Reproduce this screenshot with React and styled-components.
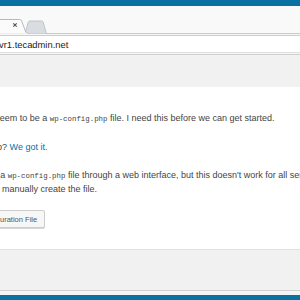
import React from 'react'
import styled, { createGlobalStyle } from 'styled-components'

const GlobalStyle = createGlobalStyle`
  html, body {
    margin: 0;
    padding: 0;
    width: 300px;
    height: 300px;
    overflow: hidden;
    background: #f1f1f1;
  }
  #root {
    height: 300px;
  }
`

const Frame = styled.div`
  display: flex;
  flex-direction: column;
  height: 300px;
  font-family: "Liberation Sans", Arial, sans-serif;
`

const TitleBar = styled.div`
  height: 6px;
  background: #0a72a3;
  flex-shrink: 0;
`

const TabStrip = styled.div`
  height: 27px;
  background: #f9f9f9;
  border-bottom: 1px solid #c9c9c9;
  display: flex;
  align-items: flex-end;
  flex-shrink: 0;
`

const TabRow = styled.svg`
  display: block;
  margin-bottom: -1px;
`

const Toolbar = styled.div`
  background: #f7f7f7;
  padding-top: 1px;
  border-bottom: 1px solid #cfcfcf;
  flex-shrink: 0;
`

const Omnibox = styled.div`
  height: 16px;
  background: #fff;
  border-top: 1px solid #cdcdcd;
  border-bottom: 1px solid #dedede;
  margin-bottom: 1px;
  display: flex;
  align-items: center;
`

const Url = styled.span`
  font-size: 9.4px;
  color: #222;
  margin-left: -1px;
  white-space: nowrap;
`

const Page = styled.div`
  flex: 1;
  display: flex;
  flex-direction: column;
  background: #f1f1f1;
  padding-top: 32px;
`

const Panel = styled.div`
  background: #fff;
  border-bottom: 1px solid #e2e2e2;
  padding-top: 25px;
  box-sizing: border-box;
  height: 163px;
`

const Content = styled.div`
  margin-left: -62px;
  white-space: nowrap;
  font-size: 9px;
  line-height: 13px;
  color: #444;
`

const Para = styled.p`
  margin: 0 0 ${p => p.$gap || 15}px;
`

const Code = styled.code`
  font-family: "Liberation Mono", monospace;
  font-size: 7.4px;
  color: #444;
`

const Link = styled.a`
  color: #0073aa;
  text-decoration: none;
`

const Button = styled.span`
  display: inline-flex;
  align-items: center;
  box-sizing: border-box;
  height: 18px;
  margin-left: 1.5px;
  padding: 0 7px;
  border: 1px solid #cccccc;
  border-radius: 2px;
  background: #f7f7f7;
  box-shadow: 0 1px 0 #d8d8d8;
  font-size: 7.5px;
  color: #555;
`

const Spacer = styled.div`
  flex: 1;
`

const BottomEdge = styled.div`
  height: 4px;
  border-top: 1px solid #d2d2d2;
  background: #f5f5f5;
  flex-shrink: 0;
`

const Taskbar = styled.div`
  height: 5px;
  background: #0a72a3;
  flex-shrink: 0;
`

const Tabs = () => (
  <TabRow width="60" height="15" viewBox="0 0 60 15">
    <path d="M25 15 L28.3 3 Q28.8 2 30 2 L41.5 2 Q42.7 2 43.1 3 L46.5 15 Z" fill="#d9dde2" stroke="#bfc4c9" strokeWidth="1" />
    <path d="M-4 15 L-4 0.5 L19.5 0.5 Q21 0.5 21.6 2 L25.8 13 Q26.5 14.5 28.5 14.5 L28.5 15 Z" fill="#fbfbfb" stroke="#b9b9b9" strokeWidth="1" />
    <path d="M-4 15 L28 15" stroke="#fbfbfb" strokeWidth="1.2" />
    <path d="M13.3 4.3 L16.7 7.7 M16.7 4.3 L13.3 7.7" stroke="#555" strokeWidth="1.1" />
  </TabRow>
)

export default function App() {
  return (
    <>
      <GlobalStyle />
      <Frame>
        <TitleBar />
        <TabStrip>
          <Tabs />
        </TabStrip>
        <Toolbar>
          <Omnibox>
            <Url>vr1.tecadmin.net</Url>
          </Omnibox>
        </Toolbar>
        <Page>
          <Panel>
            <Content>
              <Para>
                There doesn't seem to be a <Code>wp-config.php</Code> file. I need this before we can get started.
              </Para>
              <Para>
                Need more help? <Link href="#">We got it.</Link>
              </Para>
              <Para $gap={14}>
                You can create a <Code>wp-config.php</Code> file through a web interface, but this doesn't work for all server setups. The
                <br />
                safest way is to manually create the file.
              </Para>
              <Button>Create a Configuration File</Button>
            </Content>
          </Panel>
          <Spacer />
          <BottomEdge />
          <Taskbar />
        </Page>
      </Frame>
    </>
  )
}
